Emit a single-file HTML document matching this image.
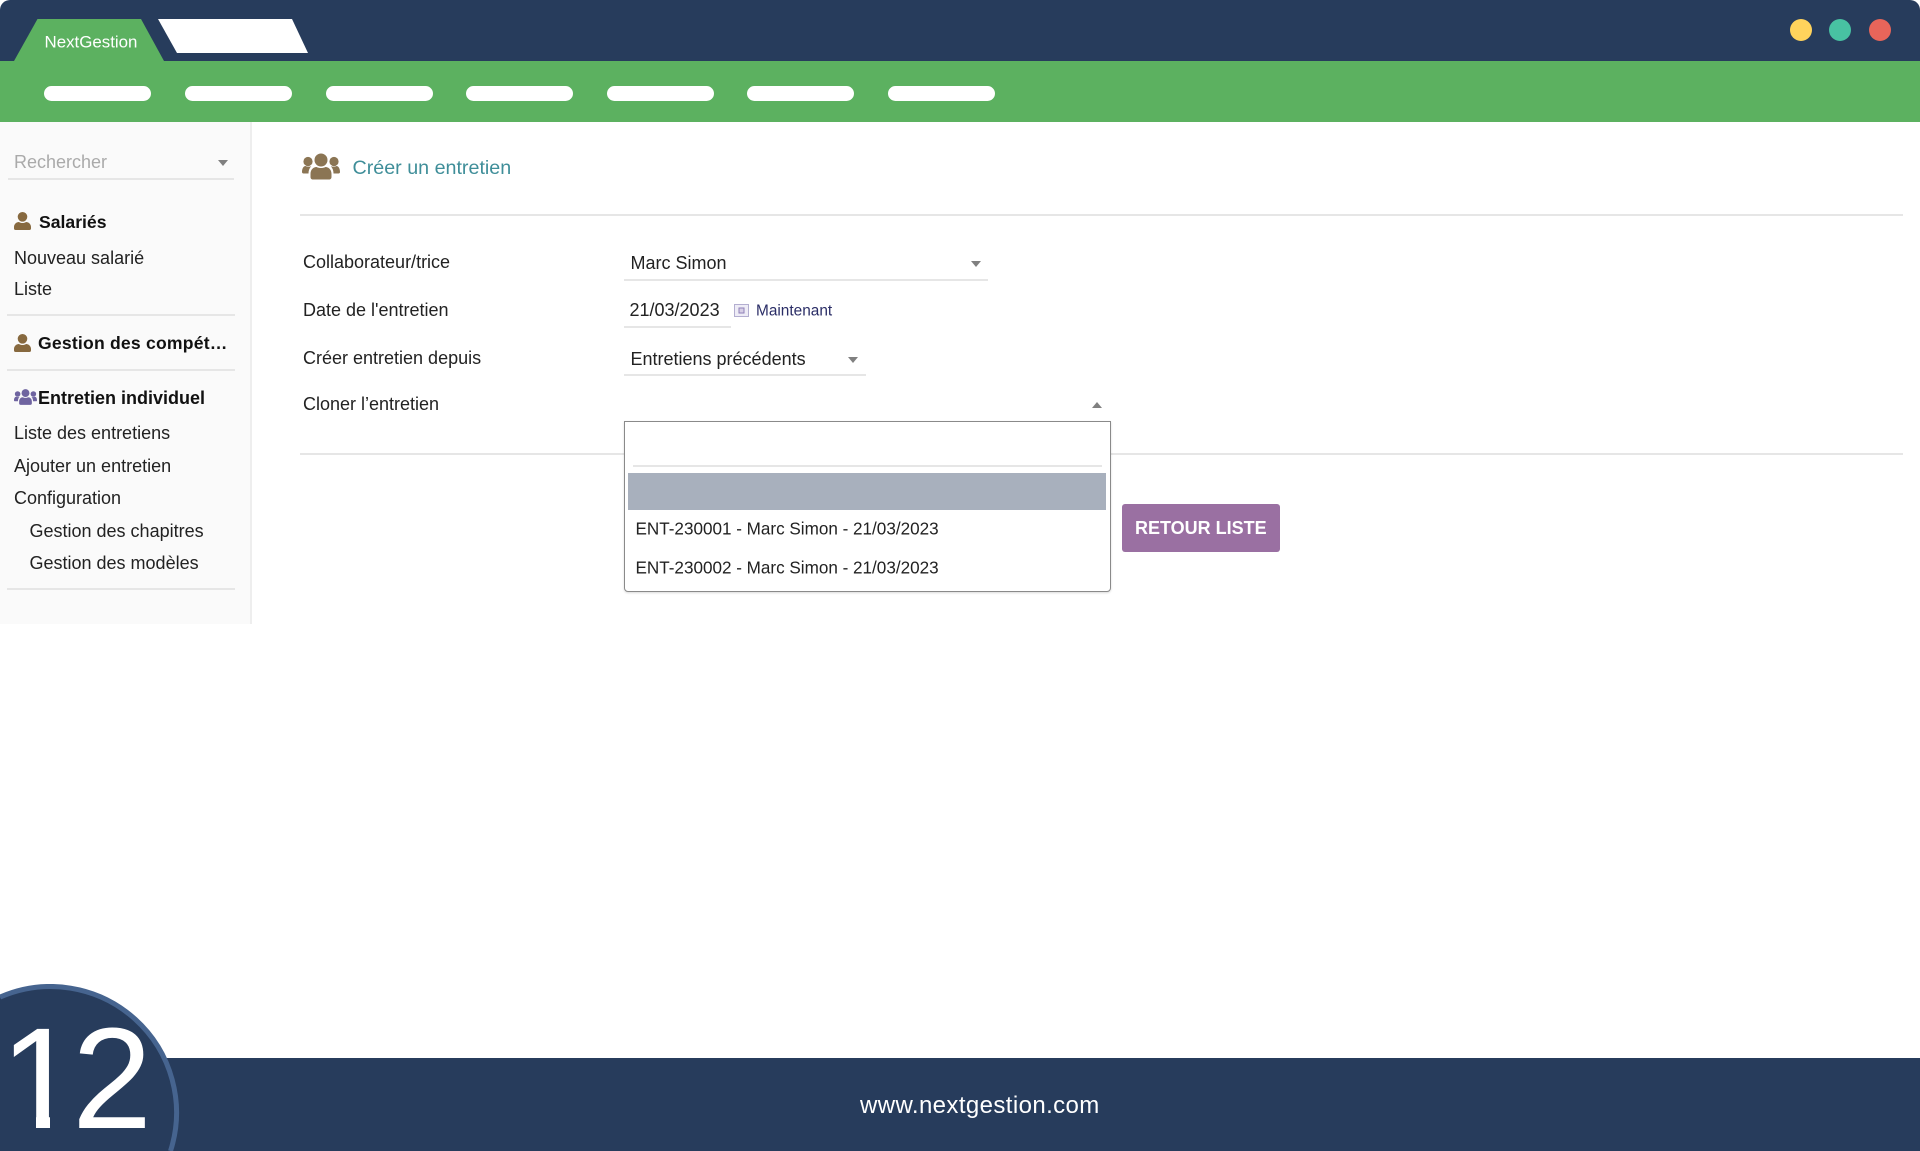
<!DOCTYPE html>
<html lang="fr"><head><meta charset="utf-8"><title>NextGestion</title>
<style>
html,body{margin:0;padding:0;background:#fff;width:1920px;height:1151px;overflow:hidden}
#p{position:relative;width:1920px;height:1151px;overflow:hidden;font-family:"Liberation Sans",Arial,sans-serif;font-size:18px;color:#222}
.a{position:absolute}
.t{position:absolute;white-space:nowrap;line-height:1;transform:translateY(-50%)}
.b{font-weight:700;color:#111;font-size:17.6px}
.n{position:absolute;top:1029px;height:100px;line-height:100px;font-size:144px;color:#fff;white-space:nowrap}
.pill{position:absolute;top:86px;width:107px;height:15px;border-radius:8px;background:#fff}
.dot{position:absolute;width:22px;height:22px;border-radius:50%;top:19px}
.hr{position:absolute;height:2px;background:#e6e6e6}
.dn,.up{position:absolute;width:0;height:0;border-left:5px solid transparent;border-right:5px solid transparent}
.dn{border-top:6px solid #808080}
.up{border-bottom:6px solid #808080}
svg{position:absolute;display:block}
</style></head><body><div id="p">

<div class="a" style="left:0;top:0;width:1920px;height:61px;background:#273c5c;border-radius:10px 10px 0 0"></div>
<div class="a" style="left:0;top:61px;width:1920px;height:61px;background:#5cb160"></div>
<svg style="left:0;top:0" width="320" height="62" viewBox="0 0 320 62">
<polygon points="14,61 37.500,19 141,19 164,61" fill="#5cb160"/>
<polygon points="158,19 292,19 308,53 177,53" fill="#fff"/>
</svg>
<div class="t" style="left:44.500px;top:43px;font-size:16.900px;color:#fff">NextGestion</div>
<div class="dot" style="left:1790px;background:#ffd35c"></div>
<div class="dot" style="left:1829px;background:#48c2a2"></div>
<div class="dot" style="left:1869px;background:#e8655a"></div>

<div class="pill" style="left:44px"></div>
<div class="pill" style="left:185px"></div>
<div class="pill" style="left:326px"></div>
<div class="pill" style="left:466px"></div>
<div class="pill" style="left:607px"></div>
<div class="pill" style="left:747px"></div>
<div class="pill" style="left:888px"></div>

<div class="a" style="left:0;top:122px;width:250px;height:502px;background:#fafafa;border-right:2px solid #eee"></div>
<div class="t" style="left:14px;top:162px;color:#aaa">Rechercher</div>
<div class="dn" style="left:218px;top:160px"></div>
<div class="hr" style="left:8px;top:178px;width:226px"></div>

<svg style="left:14px;top:212px" width="17" height="18" viewBox="0 0 17 18"><circle cx="8.500" cy="4.800" r="4.800" fill="#87693f"/><path d="M0 15C0 12 2.500 10 5 10c1 .7 2.200 1 3.500 1s2.500-.3 3.500-1c2.500 0 5 2 5 5V16.500c0 1-.7 1.500-1.500 1.500H1.500C.7 18 0 17.500 0 16.500Z" fill="#87693f"/></svg>
<div class="t b" style="left:39px;top:223px">Salariés</div>
<div class="t" style="left:14px;top:257.500px">Nouveau salarié</div>
<div class="t" style="left:14px;top:289px">Liste</div>
<div class="hr" style="left:7px;top:314px;width:228px"></div>

<svg style="left:14px;top:334px" width="17" height="18" viewBox="0 0 17 18"><circle cx="8.500" cy="4.800" r="4.800" fill="#87693f"/><path d="M0 15C0 12 2.500 10 5 10c1 .7 2.200 1 3.500 1s2.500-.3 3.500-1c2.500 0 5 2 5 5V16.500c0 1-.7 1.500-1.500 1.500H1.500C.7 18 0 17.500 0 16.500Z" fill="#87693f"/></svg>
<div class="t b" style="left:38px;top:344px;letter-spacing:.2px">Gestion des compét…</div>
<div class="hr" style="left:7px;top:369px;width:228px"></div>

<svg style="left:14px;top:389px" width="23" height="16" viewBox="0 0 38 26"><g fill="#6f64a0"><circle cx="19" cy="6.500" r="6.500"/><circle cx="6" cy="8" r="4.600"/><circle cx="32" cy="8" r="4.600"/><path d="M8.500 20.500c0-4.500 3-7 6-7 1.400.7 3 1 4.500 1s3.100-.3 4.500-1c3 0 6 2.500 6 7v3c0 1.500-1 2.500-2.500 2.500H11c-1.500 0-2.500-1-2.500-2.500Z"/><path d="M6.500 20H1.500C.5 20 0 19.300 0 18.500c0-3.500 1.500-6 3.500-6 1.200.7 3.500.9 5.700.2-1.800 1.800-2.700 4.300-2.700 7.300Z"/><path d="M31.500 20h5c1 0 1.500-.7 1.500-1.500 0-3.500-1.500-6-3.500-6-1.200.7-3.500.9-5.700.2 1.800 1.800 2.700 4.300 2.700 7.300Z"/></g></svg>
<div class="t b" style="left:38px;top:398px;font-size:18px">Entretien individuel</div>
<div class="t" style="left:14px;top:433px">Liste des entretiens</div>
<div class="t" style="left:14px;top:466px">Ajouter un entretien</div>
<div class="t" style="left:14px;top:498px">Configuration</div>
<div class="t" style="left:29.500px;top:530.500px">Gestion des chapitres</div>
<div class="t" style="left:29.500px;top:562.500px">Gestion des modèles</div>
<div class="hr" style="left:7px;top:588px;width:228px"></div>

<svg style="left:302px;top:153px" width="38" height="27" viewBox="0 0 38 26"><g fill="#8b7554"><circle cx="19" cy="6.500" r="6.500"/><circle cx="6" cy="8" r="4.600"/><circle cx="32" cy="8" r="4.600"/><path d="M8.500 20.500c0-4.500 3-7 6-7 1.400.7 3 1 4.500 1s3.100-.3 4.500-1c3 0 6 2.500 6 7v3c0 1.500-1 2.500-2.500 2.500H11c-1.500 0-2.500-1-2.500-2.500Z"/><path d="M6.500 20H1.500C.5 20 0 19.300 0 18.500c0-3.500 1.500-6 3.500-6 1.200.7 3.500.9 5.700.2-1.800 1.800-2.700 4.300-2.700 7.300Z"/><path d="M31.500 20h5c1 0 1.500-.7 1.500-1.500 0-3.500-1.500-6-3.500-6-1.200.7-3.500.9-5.700.2 1.800 1.800 2.700 4.300 2.700 7.300Z"/></g></svg>
<div class="t" style="left:352.500px;top:169px;font-size:19.700px;color:#3f8e99">Créer un entretien</div>
<div class="hr" style="left:300px;top:214px;width:1603px"></div>

<div class="t" style="left:303px;top:262.200px">Collaborateur/trice</div>
<div class="t" style="left:303px;top:310px">Date de l'entretien</div>
<div class="t" style="left:303px;top:357.500px">Créer entretien depuis</div>
<div class="t" style="left:303px;top:404px">Cloner l’entretien</div>

<div class="t" style="left:630.500px;top:263px">Marc Simon</div>
<div class="hr" style="left:624px;top:279px;width:364px"></div>
<div class="dn" style="left:971px;top:261px"></div>

<div class="t" style="left:629.500px;top:310px">21/03/2023</div>
<div class="hr" style="left:624px;top:326px;width:107px"></div>
<svg style="left:734px;top:304px" width="15" height="13" viewBox="0 0 15 13"><rect x=".5" y=".5" width="14" height="12" fill="#eeecf6" stroke="#b3aed0"/><rect x="5" y="4" width="5" height="5" fill="#d7cfe6" stroke="#8f80b8"/></svg>
<div class="t" style="left:756px;top:310.500px;font-size:15.400px;color:#2a2d66">Maintenant</div>

<div class="t" style="left:630.500px;top:359px">Entretiens précédents</div>
<div class="hr" style="left:624px;top:374px;width:242px"></div>
<div class="dn" style="left:848px;top:357px"></div>

<div class="up" style="left:1092px;top:402px"></div>
<div class="hr" style="left:300px;top:452.500px;width:1603px"></div>

<div class="a" style="left:624px;top:421px;width:485px;height:169px;background:#fff;border:1px solid #8a8a8a;border-radius:0 0 4px 4px;box-shadow:0 1px 2px rgba(0,0,0,.15)"></div>
<div class="hr" style="left:633px;top:464.500px;width:469px"></div>
<div class="a" style="left:628px;top:472.500px;width:478px;height:37px;background:#a8b0bd"></div>
<div class="t" style="left:635.500px;top:528.500px;font-size:17.100px">ENT-230001 - Marc Simon - 21/03/2023</div>
<div class="t" style="left:635.500px;top:567.500px;font-size:17.100px">ENT-230002 - Marc Simon - 21/03/2023</div>

<div class="a" style="left:1122px;top:504px;width:158px;height:48px;background:#9a70a2;border-radius:3px"></div>
<div class="t" style="left:1135px;top:528px;font-weight:700;font-size:18px;color:#fff">RETOUR LISTE</div>

<div class="a" style="left:0;top:1058px;width:1920px;height:93px;background:#273c5c"></div>
<svg style="left:0;top:984px" width="180" height="167" viewBox="0 0 180 167"><path d="M0 13.100A126 126 0 0 1 170.500 167L0 167Z" fill="#273c5c"/><path d="M0 13.100A126 126 0 0 1 170.500 167" fill="none" stroke="#46648f" stroke-width="5"/></svg>
<div class="n" style="left:0">1</div>
<div class="a" style="left:6px;top:1116px;width:30px;height:16px;background:#273c5c"></div>
<div class="a" style="left:50px;top:1116px;width:28px;height:16px;background:#273c5c"></div>
<div class="n" style="left:72px">2</div>
<div class="t" style="left:860px;top:1105.500px;font-size:24px;letter-spacing:.4px;color:#fff">www.nextgestion.com</div>
</div></body></html>
